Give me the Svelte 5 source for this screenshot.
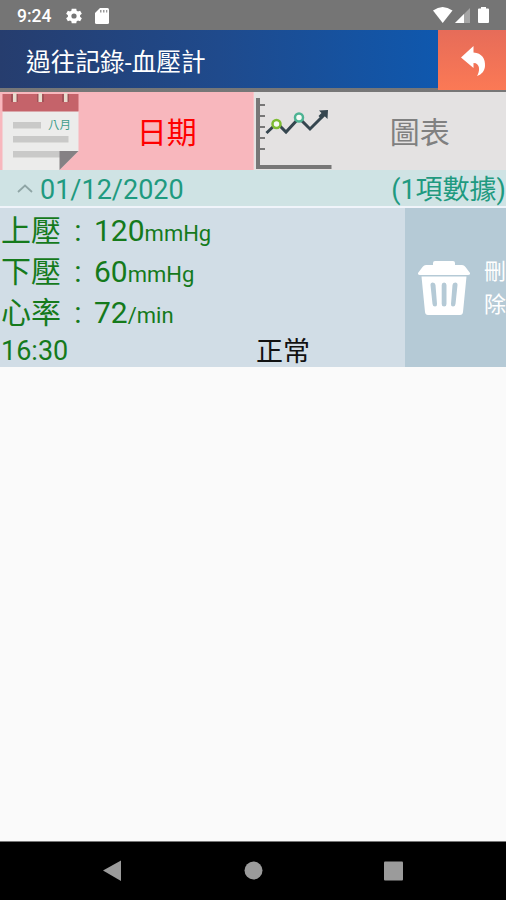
<script>
	let activeTab = 'date';
	let expanded = true;

	const readings = [
		{ label: '上壓', value: 120, unit: 'mmHg' },
		{ label: '下壓', value: 60, unit: 'mmHg' },
		{ label: '心率', value: 72, unit: '/min' }
	];
</script>

<div class="screen">
	<div class="status">
		<span class="clock">9:24</span>
		<svg class="gear" width="18" height="18" viewBox="1 1 22 22">
			<path fill-rule="evenodd" d="M19.4 13a7.500 7.500 0 0 0 0-2l2.200-1.700-2.100-3.700-2.700 1a8 8 0 0 0-1.600-.9L14.800 3H9.200l-.4 2.700a8 8 0 0 0-1.600.9l-2.700-1-2.100 3.700L4.600 11a7.500 7.500 0 0 0 0 2l-2.200 1.700 2.100 3.700 2.700-1a8 8 0 0 0 1.600.9l.4 2.700h5.600l.4-2.700a8 8 0 0 0 1.600-.9l2.700 1 2.100-3.700zM12 15.200a3.200 3.200 0 1 1 0-6.400 3.200 3.200 0 0 1 0 6.400z" />
		</svg>
		<svg class="card" width="14" height="16" viewBox="0 0 14 16">
			<path d="M5 0h7.500Q14 0 14 1.500v13q0 1.500-1.500 1.500h-11Q0 16 0 14.500V5z" />
			<path class="pins" d="M5 2h1.500v2.500H5zM8 2h1.500v2.500H8zM11 2h1.300v2.500H11z" />
		</svg>
		<svg class="signals" width="58" height="17" viewBox="0 0 58 17">
			<path d="M0 3.500Q9.500-3.500 19.500 3.500L9.700 16z" />
			<path d="M22 16 37 1v15z" opacity=".35" />
			<path d="M22 16 31 7v9z" />
			<path d="M48 0h5v1.500h2q1 0 1 1V15q0 1-1 1h-9q-1 0-1-1V2.500q0-1 1-1h2z" />
		</svg>
	</div>

	<header>
		<h1>過往記錄-血壓計</h1>
		<button class="back" aria-label="返回">
			<svg width="25" height="30" viewBox="0 0 25 30">
				<path d="M0 11.500 12.500 0v6.500C21 7 24.500 13 24 20c-.3 4.500-3 8.500-8 10 3-4.500 3.500-13-3.500-13V22z" />
			</svg>
		</button>
	</header>

	<div class="tabs">
		<button class="tab" class:active={activeTab === 'date'} on:click={() => (activeTab = 'date')}>
			<svg width="80" height="78" viewBox="0 0 80 78">
				<path fill="#ececeb" d="M2.500 19h76v40L59.500 78h-57z" />
				<path fill="#c5636a" d="M2.500 2h76v17.500h-76z" />
				<path fill="#8c4a4f" d="M11 2h7v8h-7zM37 2h7v8h-7zM62 2h7v8h-7z" opacity=".6" />
				<path fill="#e8ddcf" d="M13 1h3.500v9H13zM38.500 1H42v9h-3.500zM64 1h3.500v9H64z" />
				<path fill="#c9c9c8" d="M13 30h28v6.500H13zM13 44h55.500v6.500H13zM13 59h47v6.500H13z" />
				<path fill="#858184" d="M59.500 59h19l-19 19z" />
				<text x="48" y="37">八月</text>
			</svg>
			<span>日期</span>
		</button>
		<button class="tab" class:active={activeTab === 'chart'} on:click={() => (activeTab = 'chart')}>
			<svg width="80" height="78" viewBox="1 0 80 78">
				<path class="axis" d="M5 6v69h73.500" />
				<path class="ticks" d="M5 13h7M5 24h7M5 35h7M5 46h7M5 57h7" />
				<path class="trend" d="M13.500 41 24 31l9 9 13-14 11 11 15-15" />
				<path fill="#35464f" d="M66 18.500l9-.5-.5 9-3-3-3 3-3-3 3-3z" />
				<circle cx="23.500" cy="32" r="4" stroke="#7dbc32" />
				<circle cx="46" cy="25.500" r="4" stroke="#4db393" />
			</svg>
			<span>圖表</span>
		</button>
	</div>

	<button class="day" on:click={() => (expanded = !expanded)}>
		<svg width="16" height="9" viewBox="0 0 16 9"><path d="M1 8 8 1.500 15 8" /></svg>
		<div class="day-text">
			<span>01/12/2020</span>
			<span>(1項數據)</span>
		</div>
	</button>

	{#if expanded}
		<div class="record">
			<div class="details">
				{#each readings as r}
					<p class="reading">{r.label}<span class="colon">:</span>{r.value}<small>{r.unit}</small></p>
				{/each}
				<div class="summary">
					<span>16:30</span>
					<span class="result">正常</span>
				</div>
			</div>
			<button class="delete">
				<svg width="52" height="54" viewBox="0 0 52 54">
					<path d="M15 4V2q0-2 2-2h18q2 0 2 2v2h7q2 0 3.500 2L52 12q.5 2-2 2H2q-2.500 0-2-2l4.500-6Q6 4 8 4z" />
					<path fill-rule="evenodd" d="M3.500 15.500h45L45 51q-.3 3-3 3H10q-2.700 0-3-3zM12.500 24l2 19q.3 2.500 2.500 2.500t2-2.500l-1.500-19q-.3-2.500-2.700-2.500t-2.300 2.500zM23.700 24v19q0 2.500 2.400 2.500t2.400-2.500V24q0-2.500-2.400-2.500t-2.400 2.500zM34.500 24 33 43q-.2 2.500 2 2.500t2.500-2.500l2-19q.2-2.500-2.300-2.500t-2.700 2.500z" />
				</svg>
				<span>刪除</span>
			</button>
		</div>
	{/if}

	<nav>
		<svg width="506" height="58" viewBox="0 0 506 58">
			<path d="M103 28.500 121 18.500v20.500z" />
			<circle cx="253.500" cy="28.500" r="9" />
			<rect x="384" y="19.500" width="19" height="19" rx="1" />
		</svg>
	</nav>
</div>

<style>
	:global(body) {
		margin: 0;
	}

	.screen {
		display: flex;
		flex-direction: column;
		width: 506px;
		height: 900px;
		overflow: hidden;
		background: #fafafa;
		font-family: Roboto, 'Noto Sans CJK TC', sans-serif;
	}

	button {
		border: none;
		padding: 0;
		margin: 0;
		font: inherit;
		text-align: left;
		cursor: pointer;
	}

	svg {
		display: block;
		flex: none;
	}

	.status {
		display: flex;
		align-items: center;
		height: 30px;
		flex: none;
		box-sizing: border-box;
		padding: 1px 15px 0 17px;
		background: #757575;
		color: #fff;
		fill: #fff;
	}

	.clock {
		width: 48px;
		font-size: 17.500px;
		font-weight: 500;
	}

	.card {
		margin-left: 12px;
	}

	.pins {
		fill: #999;
	}

	.signals {
		margin-left: auto;
	}

	header {
		display: flex;
		height: 62px;
		flex: none;
		background: linear-gradient(#5d6f8b, #777);
	}

	h1 {
		width: 438px;
		height: 58px;
		box-sizing: border-box;
		margin: 0;
		padding-left: 26px;
		background: linear-gradient(90deg, #263d6e, #1f4a8c 50%, #0f58ae);
		color: #fff;
		font-size: 24.700px;
		font-weight: 400;
		line-height: 65px;
	}

	.back {
		display: flex;
		width: 68px;
		height: 60px;
		padding: 2px 0 0 23px;
		box-sizing: border-box;
		align-items: center;
		background: linear-gradient(#e66c59, #fb7955);
		fill: #fff;
	}

	.tabs {
		display: flex;
		height: 78px;
		flex: none;
		gap: 1px;
		background: #f9c5c9;
	}

	.tab {
		display: flex;
		align-items: center;
		width: 253px;
		background: #e4e2e2;
		color: #808080;
		font-size: 30px;
	}

	.tab.active {
		background: #f8b7bd;
		color: #f00;
	}

	.tab span {
		flex: 1;
		padding-bottom: 2px;
		text-align: center;
	}

	.tab.active span {
		padding-left: 1px;
	}

	.tab text {
		font-size: 11.500px;
		fill: #3f9c8a;
	}

	.axis {
		fill: none;
		stroke: #777;
		stroke-width: 4;
	}

	.ticks {
		stroke: #777;
		stroke-width: 2;
	}

	.trend {
		fill: none;
		stroke: #35464f;
		stroke-width: 3;
	}

	circle[stroke] {
		fill: #f5faf5;
		stroke-width: 2.500;
	}

	.day {
		display: flex;
		align-items: center;
		height: 38px;
		flex: none;
		box-sizing: border-box;
		padding-left: 17px;
		border-bottom: 2px solid #f0f4fa;
		background: #cfe3e4;
		color: #1f9a80;
		font-size: 27px;
		white-space: nowrap;
	}

	.day svg {
		margin-right: 7px;
		fill: none;
		stroke: #8fa5a5;
		stroke-width: 1.800;
	}

	.day-text {
		display: flex;
		flex: 1;
		align-items: baseline;
		justify-content: space-between;
		padding-top: 4px;
		line-height: 36px;
	}

	.record {
		display: flex;
		height: 159px;
		flex: none;
	}

	.details {
		width: 405px;
		background: #d1dde6;
		color: #157a1c;
	}

	.reading {
		height: 41px;
		margin: 0;
		padding-left: 1px;
		font-size: 30px;
		line-height: 45px;
	}

	.colon {
		display: inline-block;
		width: 33px;
		padding-left: 1px;
		box-sizing: border-box;
		text-align: center;
	}

	small {
		font-size: 22px;
	}

	.summary {
		display: flex;
		padding-left: 1px;
		font-size: 27px;
		line-height: 40px;
	}

	.summary span {
		width: 255px;
	}

	.summary .result {
		width: auto;
		padding-top: 1px;
		color: #111;
	}

	.delete {
		display: flex;
		align-items: center;
		width: 101px;
		padding-left: 13px;
		box-sizing: border-box;
		background: #b5cad6;
		color: #fff;
		fill: #fff;
		font-size: 22px;
		line-height: 33px;
	}

	.delete span {
		width: 22px;
		margin-left: 14px;
		word-break: break-all;
	}

	nav {
		margin-top: auto;
		border-top: 1px solid #777;
		background: #000;
		fill: #9b9b9b;
	}
</style>
